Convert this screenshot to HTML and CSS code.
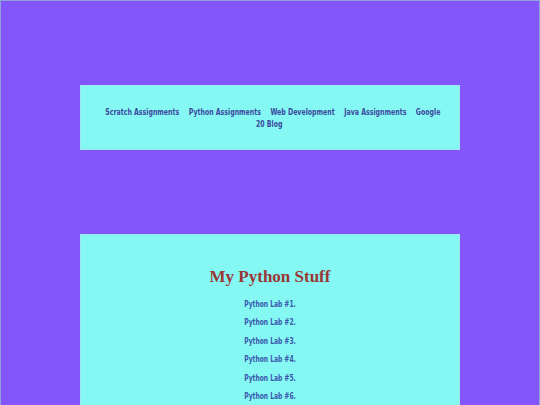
FILE: index.html
```html
<!DOCTYPE html>
<html>
<head>
<meta charset="utf-8">
<link rel="stylesheet" href="styles.css">
</head>
<body>
<div class="page">
  <nav class="nav">
    <div class="nav-inner">
      <a class="nav-link">Scratch Assignments</a>
      <a class="nav-link">Python Assignments</a>
      <a class="nav-link">Web Development</a>
      <a class="nav-link">Java Assignments</a>
      <a class="nav-link nav-link-first">Google</a>
      <a class="nav-link nav-link-rest">20 Blog</a>
    </div>
  </nav>
  <main class="content">
    <h1 class="title">My Python Stuff</h1>
    <div class="labs">
      <p class="lab">Python Lab #1.</p>
      <p class="lab">Python Lab #2.</p>
      <p class="lab">Python Lab #3.</p>
      <p class="lab">Python Lab #4.</p>
      <p class="lab">Python Lab #5.</p>
      <p class="lab">Python Lab #6.</p>
    </div>
  </main>
</div>
</body>
</html>
```
FILE: styles.css
```css
html, body {
  margin: 0;
  padding: 0;
}
body {
  background: #8356fb;
  border-top: 1px solid #93a2d6;
  border-left: 1px solid #93a2d6;
  border-right: 1px solid #93a2d6;
  min-height: 404px;
  box-sizing: border-box;
  overflow: hidden;
}
.page {
  display: flex;
  flex-direction: column;
  align-items: center;
  padding-top: 84px;
  gap: 84px;
}
.nav {
  width: 380px;
  box-sizing: border-box;
  background: #86f8f4;
  border: 1px solid #9ee6f4;
  padding: 20px 20px 19px;
  font-family: "DejaVu Sans Condensed", "DejaVu Sans", sans-serif;
  font-weight: bold;
  font-size: 9.5px;
  line-height: 12px;
  color: #3a4a9e;
}
.nav-inner {
  width: 466px;
  margin-left: -63px;
  text-align: center;
  transform: scaleX(0.73);
}
.nav-link {
  margin: 0 5px;
}
.nav-link-first {
  margin-right: 0;
}
.nav-link-rest {
  margin-left: 0;
}
.content {
  width: 380px;
  box-sizing: border-box;
  background: #86f8f4;
  border: 1px solid #9ee6f4;
  padding-top: 30px;
  min-height: 200px;
  text-align: center;
}
.title {
  margin: 0 0 6px;
  font-family: "Liberation Serif", serif;
  font-weight: bold;
  font-size: 17px;
  line-height: 23px;
  color: #9a3636;
}
.labs {
  padding-top: 1px;
  transform: scaleX(0.7);
}
.lab {
  margin: 0;
  font-family: "DejaVu Sans Condensed", "DejaVu Sans", sans-serif;
  font-weight: bold;
  font-size: 9.5px;
  line-height: 18.4px;
  color: #3857ad;
}
```
